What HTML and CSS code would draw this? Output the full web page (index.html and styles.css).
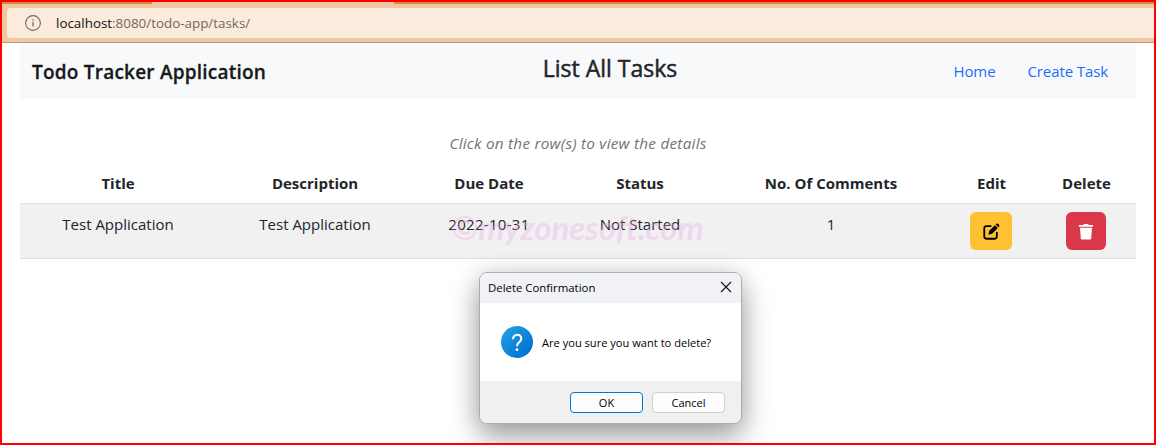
FILE: index.html
```html
<!DOCTYPE html>
<html lang="en">
<head>
<meta charset="utf-8">
<title>Todo Tracker Application</title>
<link rel="stylesheet" href="styles.css">
</head>
<body>
<div class="window">
  <div class="tabstrip"><div class="tab"></div></div>
  <div class="toolbar">
    <div class="address">
      <svg class="info" viewBox="0 0 16 16" fill="none" stroke="#6f6965"><circle cx="8" cy="8" r="7.4" stroke-width="1.1"/><path d="M8 7v4.6M8 4.2v1.5" stroke-width="1.3"/></svg>
      <span class="url"><b>localhost</b>:8080/todo-app/tasks/</span>
    </div>
  </div>
  <main class="page">
    <nav class="navbar">
      <div class="brand"><span>Todo Tracker Application</span></div>
      <h1 class="heading">List All Tasks</h1>
      <div class="links"><a class="home">Home</a><a class="create">Create Task</a></div>
    </nav>
    <p class="hint">Click on the row(s) to view the details</p>
    <div class="row head">
      <span>Title</span><span>Description</span><span>Due Date</span><span>Status</span><span>No. Of Comments</span><span>Edit</span><span>Delete</span>
    </div>
    <div class="row item">
      <span>Test Application</span><span>Test Application</span><span class="date">2022-10-31</span><span>Not Started</span><span>1</span>
      <span><button class="btn edit"><svg viewBox="0 0 16 16"><path d="M7.2 3H3.2Q1.2 3 1.2 5v7.8q0 2 2 2H11q2 0 2-2V9.2" fill="none" stroke="#000" stroke-width="1.7" stroke-linecap="round"/><path d="M5.1 11l.8-3.6L11.2 2.1l2.7 2.7-5.3 5.3z"/><path d="M12 1.4l.7-.7q.8-.6 1.5.1l1 1q.6.8 0 1.4l-.7.8z"/></svg></button></span>
      <span><button class="btn del"><svg viewBox="0 0 16 16" fill="#fff"><path d="M1 1.5h4.2L6 .5h4l.8 1H15v1.7H1zM2 4.2h12l-.8 11q-.1.8-.9.8H3.7q-.8 0-.9-.8z"/></svg></button></span>
    </div>
  </main>
  <div class="watermark">©myzonesoft.com</div>
  <section class="dialog">
    <header class="titlebar"><span>Delete Confirmation</span><svg viewBox="0 0 12 12" stroke="#111" stroke-width="1.1"><path d="M1 1l10 10M11 1L1 11"/></svg></header>
    <div class="message">
      <svg class="question" viewBox="0 0 32 32"><defs><linearGradient id="blue" x1="0" y1="0" x2="1" y2="1"><stop offset="0" stop-color="#20a5e4"/><stop offset="1" stop-color="#0069cc"/></linearGradient></defs><circle cx="16" cy="16" r="16" fill="url(#blue)"/><path d="M12 13.2C11.8 7.4 20.5 7.5 20.3 12.6 20.2 16 16 16 16 20.3" fill="none" stroke="#fff" stroke-width="2"/><circle cx="16" cy="23.7" r="1.4" fill="#fff"/></svg>
      <span>Are you sure you want to delete?</span>
    </div>
    <footer class="actions"><button class="choice primary">OK</button><button class="choice">Cancel</button></footer>
  </section>
</div>
</body>
</html>
```
FILE: styles.css
```css
* { box-sizing: border-box; }
body { margin: 0; font-family: "Open Sans", "Noto Sans", sans-serif; color: #212529; }
button { font-family: inherit; padding: 0; }
svg { display: block; }
.window { position: relative; width: 1156px; height: 445px; border: 2px solid #f00; background: #fff; overflow: hidden; }
.tabstrip { height: 2px; background: #db8740; padding-left: 150px; }
.tab { width: 242px; height: 2px; background: #efc8a2; }
.toolbar { height: 39px; background: #efc7a1; border-bottom: 1px solid #b99a80; padding: 4px 0 0 5px; }
.address { height: 30px; background: #faebdd; border-radius: 4px 0 0 4px; display: flex; align-items: center; padding-left: 18px; }
.info { width: 16px; height: 16px; margin-right: 15px; }
.url { font-size: 13.4px; color: #706862; white-space: nowrap; }
.url b { font-weight: 400; color: #111; }
.page { padding: 0 18px; }
.navbar { height: 56px; background: #f8f9fb; display: grid; grid-template-columns: 372px 436px 308px; }
.brand { font-size: 19px; font-weight: 600; line-height: 58px; padding-left: 12px; white-space: nowrap; color: #18191b; letter-spacing: .22px; -webkit-text-stroke: .3px; }
.heading { margin: 0; font-size: 23px; line-height: 51px; font-weight: 400; text-align: center; white-space: nowrap; -webkit-text-stroke: .5px; }
.links { display: flex; justify-content: flex-end; gap: 32px; padding-right: 28px; font-size: 15px; letter-spacing: -.1px; line-height: 56px; color: #1d6dfd; white-space: nowrap; }
.hint { margin: 32px 0 0; height: 24px; line-height: 24px; font-size: 15.3px; letter-spacing: .24px; font-style: italic; color: #6c757d; text-align: center; }
.row { display: grid; grid-template-columns: 196px 198px 150px 152px 230px 91px 99px; text-align: center; font-size: 15px; line-height: 24px; white-space: nowrap; }
.row > span { display: flex; justify-content: center; }
.head { font-weight: 700; height: 49px; padding-top: 16px; border-bottom: 1px solid #dee2e6; }
.item { height: 55px; padding-top: 8px; background: #f1f1f1; border-bottom: 1px solid #dee0e4; }
.date { letter-spacing: .3px; }
.btn { border: 0; border-radius: 6px; height: 38px; display: flex; align-items: center; justify-content: center; margin-right: 2px; }
.edit { width: 42px; background: #fdc132; padding-left: 2px; }
.edit svg { width: 17px; height: 17px; }
.del { width: 40px; background: #da3848; }
.del svg { width: 16px; height: 17px; }
.watermark { position: absolute; left: 449px; top: 200px; font: italic 700 33px/50px Lato, sans-serif; color: #e9a9e8; opacity: .34; white-space: nowrap; }
.dialog { position: absolute; left: 477px; top: 270px; width: 263px; height: 152px; border: 1px solid #acacae; border-radius: 8px; background: #fff; overflow: hidden; box-shadow: 0 14px 30px rgba(0,0,0,.34), 0 0 22px rgba(0,0,0,.12); color: #000; display: flex; flex-direction: column; }
.titlebar { height: 30px; background: #f1f2f8; display: flex; align-items: center; justify-content: space-between; padding: 0 9px 2px 8px; font-size: 11.4px; }
.titlebar svg { width: 12px; height: 12px; }
.message { height: 78px; display: flex; align-items: center; padding-left: 21px; font-size: 11.1px; white-space: nowrap; }
.question { width: 32px; height: 32px; margin-right: 9px; }
.actions { flex: 1; background: #f0f0f0; padding: 11px 16px 0 0; display: flex; justify-content: flex-end; gap: 9px; }
.choice { width: 73px; height: 21px; border: 1px solid #d0d0d0; border-radius: 4px; background: #fdfdfd; font-size: 11px; color: #000; }
.primary { border-color: #0078d4; }
```
